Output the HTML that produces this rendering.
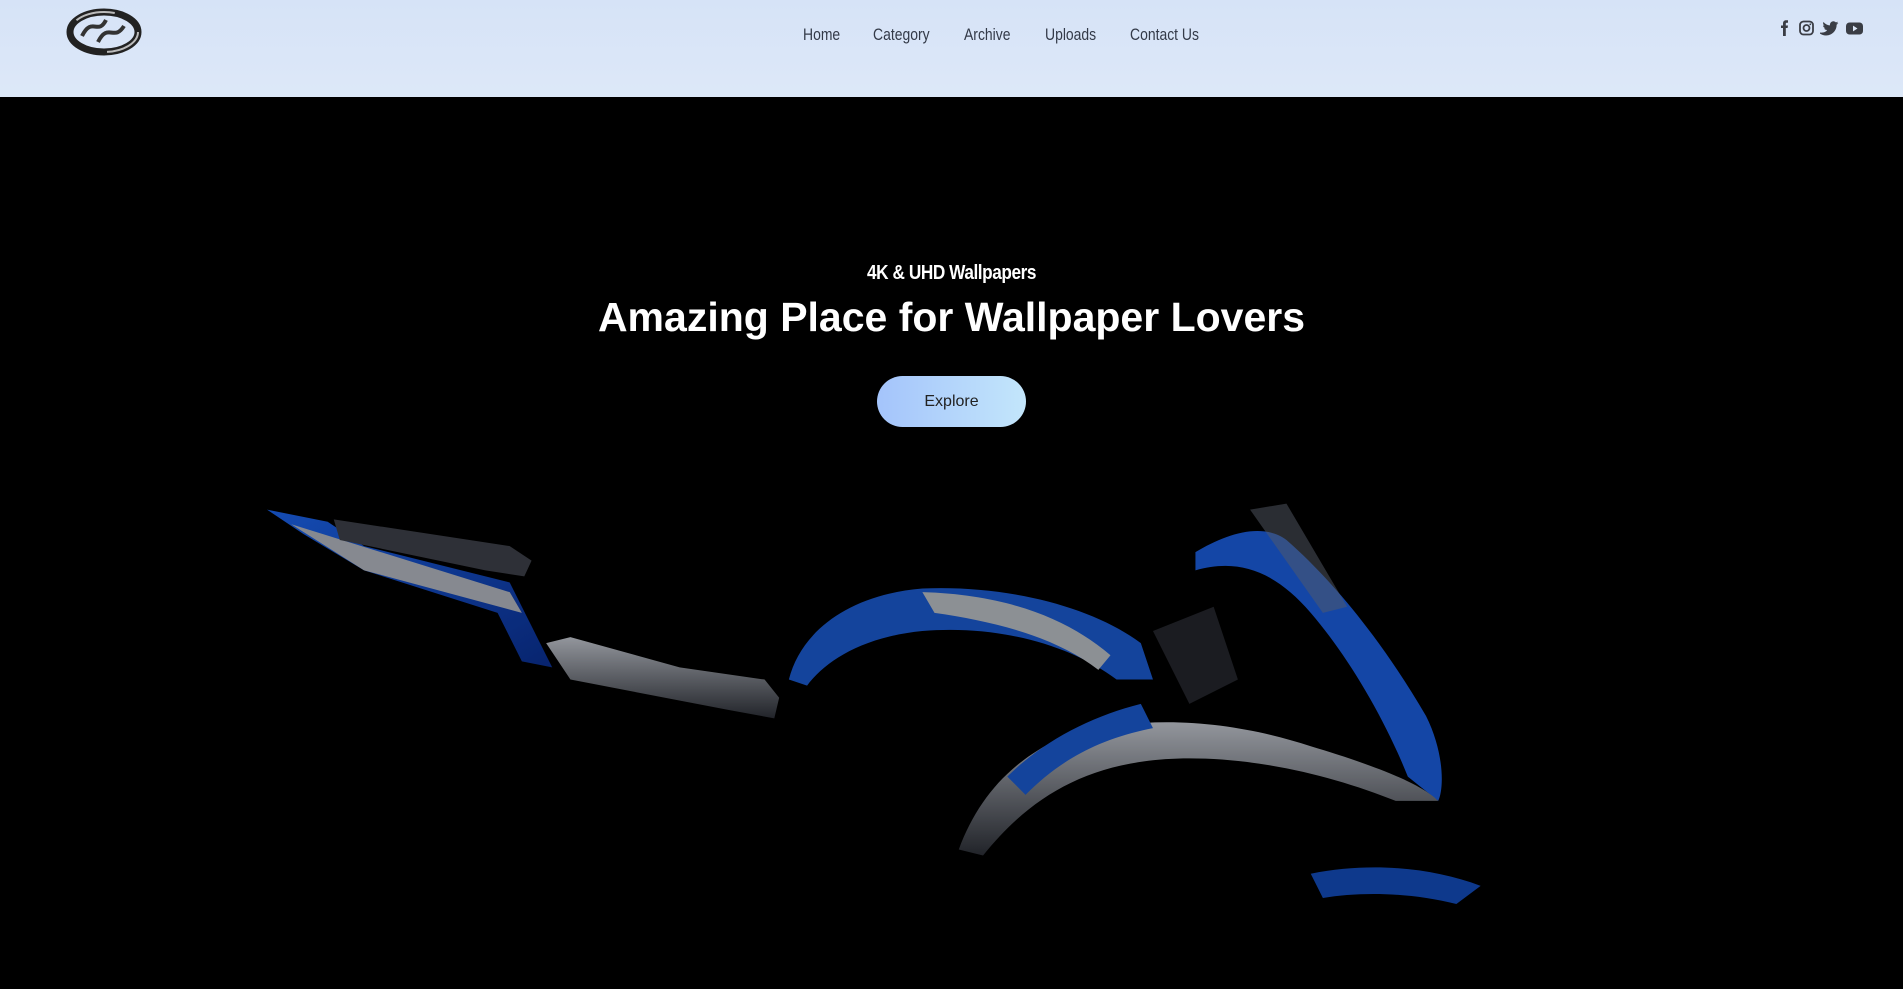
<!DOCTYPE html>
<html><head><meta charset="utf-8"><style>
*{margin:0;padding:0;box-sizing:border-box}
body{width:1903px;height:989px;overflow:hidden;background:#000;font-family:"Liberation Sans",sans-serif;position:relative}
header{position:absolute;left:0;top:0;width:1903px;height:97px;background:linear-gradient(180deg,#d6e3f7,#dde8f8);}
nav{position:absolute;top:25px;left:0;width:1903px;text-align:center}
nav a{position:absolute;top:0;font-family:"Liberation Sans Narrow","Liberation Sans",sans-serif;font-size:17px;color:#333a48;text-decoration:none;transform:scaleX(.82);transform-origin:left}
.sub{position:absolute;top:262px;width:1903px;text-align:center;color:#fff;font-weight:bold;font-size:20px;font-family:"Liberation Sans Narrow","Liberation Sans",sans-serif;letter-spacing:-0.5px;transform:scaleX(.86)}
h1{position:absolute;top:294px;width:1903px;text-align:center;color:#fff;font-size:41px;font-weight:bold;letter-spacing:0}
.btn{position:absolute;left:877px;top:376px;width:149px;height:51px;border-radius:26px;background:linear-gradient(90deg,#a4c4fb,#c3e6fb);color:#222;font-size:16px;text-align:center;line-height:52px}
</style></head><body>
<svg style="position:absolute;left:0;top:0;opacity:.8" width="1903" height="989" viewBox="0 0 1568 815" preserveAspectRatio="none">
<defs>
<linearGradient id="bl" x1="0" y1="0" x2="1" y2="1"><stop offset="0" stop-color="#1a5fe0"/><stop offset="1" stop-color="#0a2d8a"/></linearGradient>
<linearGradient id="sv" x1="0" y1="0" x2="0" y2="1"><stop offset="0" stop-color="#b8bcc4"/><stop offset="1" stop-color="#2a2d34"/></linearGradient>
</defs>
<path d="M220 420 L270 430 L300 450 L420 480 L440 520 L455 550 L430 545 L410 505 L300 470 L250 440 Z" fill="url(#bl)"/>
<path d="M240 432 L420 488 L430 505 L300 470 Z" fill="#a8acb4"/>
<path d="M275 428 L420 450 L438 462 L432 475 L400 470 L280 445 Z" fill="#3a3d45"/>
<path d="M450 530 L470 525 L560 550 L630 560 L642 575 L638 592 L600 585 L470 560 Z" fill="url(#sv)"/>
<path d="M650 560 C660 520 700 490 760 485 C830 482 900 500 940 530 L950 560 L920 560 C880 530 820 515 760 520 C710 525 680 545 665 565 Z" fill="#1a55c4"/>
<path d="M760 488 C830 490 880 510 915 540 L905 552 C870 525 820 512 770 505 Z" fill="#b0b4ba"/>
<path d="M985 455 C1010 440 1040 430 1060 445 C1100 480 1140 530 1175 590 C1190 620 1190 650 1185 660 L1160 640 C1140 590 1110 540 1080 505 C1050 470 1020 460 985 470 Z" fill="#1a58d0"/>
<path d="M1030 420 L1060 415 L1110 500 L1090 505 Z" fill="#6a7180" opacity=".5"/>
<path d="M790 700 C805 660 830 630 870 610 C940 585 1020 595 1080 615 C1130 630 1170 645 1185 660 L1150 660 C1100 640 1040 625 980 625 C900 625 850 655 810 705 Z" fill="url(#sv)"/>
<path d="M830 640 C860 610 900 590 940 580 L950 600 C900 610 870 630 845 655 Z" fill="#1a55c4"/>
<path d="M1080 720 C1130 710 1180 715 1220 730 L1200 745 C1160 735 1120 735 1090 740 Z" fill="#1248b0"/>
<path d="M950 520 L1000 500 L1020 560 L980 580 Z" fill="#22242a"/>
</svg>
<header>
<svg style="position:absolute;left:64px;top:6px" width="80" height="52" viewBox="0 0 80 52">
<ellipse cx="40" cy="26" rx="34" ry="20" fill="none" stroke="#222" stroke-width="7"/>
<ellipse cx="40" cy="26" rx="34" ry="20" fill="none" stroke="#bbb" stroke-width="2" stroke-dasharray="40 60"/>
<path d="M18 30 C28 10 34 30 42 14 M34 36 C44 16 50 36 60 20" fill="none" stroke="#333" stroke-width="4"/>
</svg>
<nav>
<a style="left:803px">Home</a>
<a style="left:873px">Category</a>
<a style="left:964px">Archive</a>
<a style="left:1045px">Uploads</a>
<a style="left:1130px">Contact Us</a>
</nav>
<svg style="position:absolute;left:1778px;top:19px" width="92" height="18" viewBox="0 0 92 18">
<path d="M5 17 V9 H3 V6.5 H5 V4.5 C5 2.5 6 1.2 8.2 1.2 H10 V3.8 H8.8 C8 3.8 7.8 4.2 7.8 4.9 V6.5 H10 L9.6 9 H7.8 V17 Z" fill="#3a3d45"/>
<rect x="22" y="2.5" width="13" height="13" rx="3.5" fill="none" stroke="#3a3d45" stroke-width="1.8"/>
<circle cx="28.5" cy="9" r="3" fill="none" stroke="#3a3d45" stroke-width="1.8"/>
<circle cx="32.3" cy="5.3" r=".9" fill="#3a3d45"/>
<path d="M42 13.5 C46 14 48.5 12.5 49 11 C47 11 46.5 10 46 9.3 C46.6 9.4 47 9.3 47.3 9.2 C45.7 8.7 45 7.6 45 6.3 C45.5 6.6 46 6.7 46.5 6.7 C45 5.6 44.8 4 45.5 3 C47.2 5 49.3 6.2 52 6.4 C51.6 4.3 53.3 2.3 55.4 2.3 C56.4 2.3 57.2 2.8 57.8 3.4 C58.6 3.2 59.3 3 59.9 2.6 C59.7 3.4 59.1 4.1 58.4 4.5 C59.1 4.4 59.7 4.2 60.3 4 C59.9 4.7 59.2 5.3 58.6 5.8 C58.8 11 54.7 16.5 48 16.5 C45.8 16.5 43.8 15.8 42 14.6 Z" fill="#3a3d45"/>
<rect x="68" y="3.5" width="17" height="12" rx="3.5" fill="#3a3d45"/>
<path d="M75 6.6 L79.5 9.5 L75 12.4 Z" fill="#dde8f8"/>
</svg>
</header>
<div class="sub">4K &amp; UHD Wallpapers</div>
<h1>Amazing Place for Wallpaper Lovers</h1>
<div class="btn">Explore</div>
</body></html>
